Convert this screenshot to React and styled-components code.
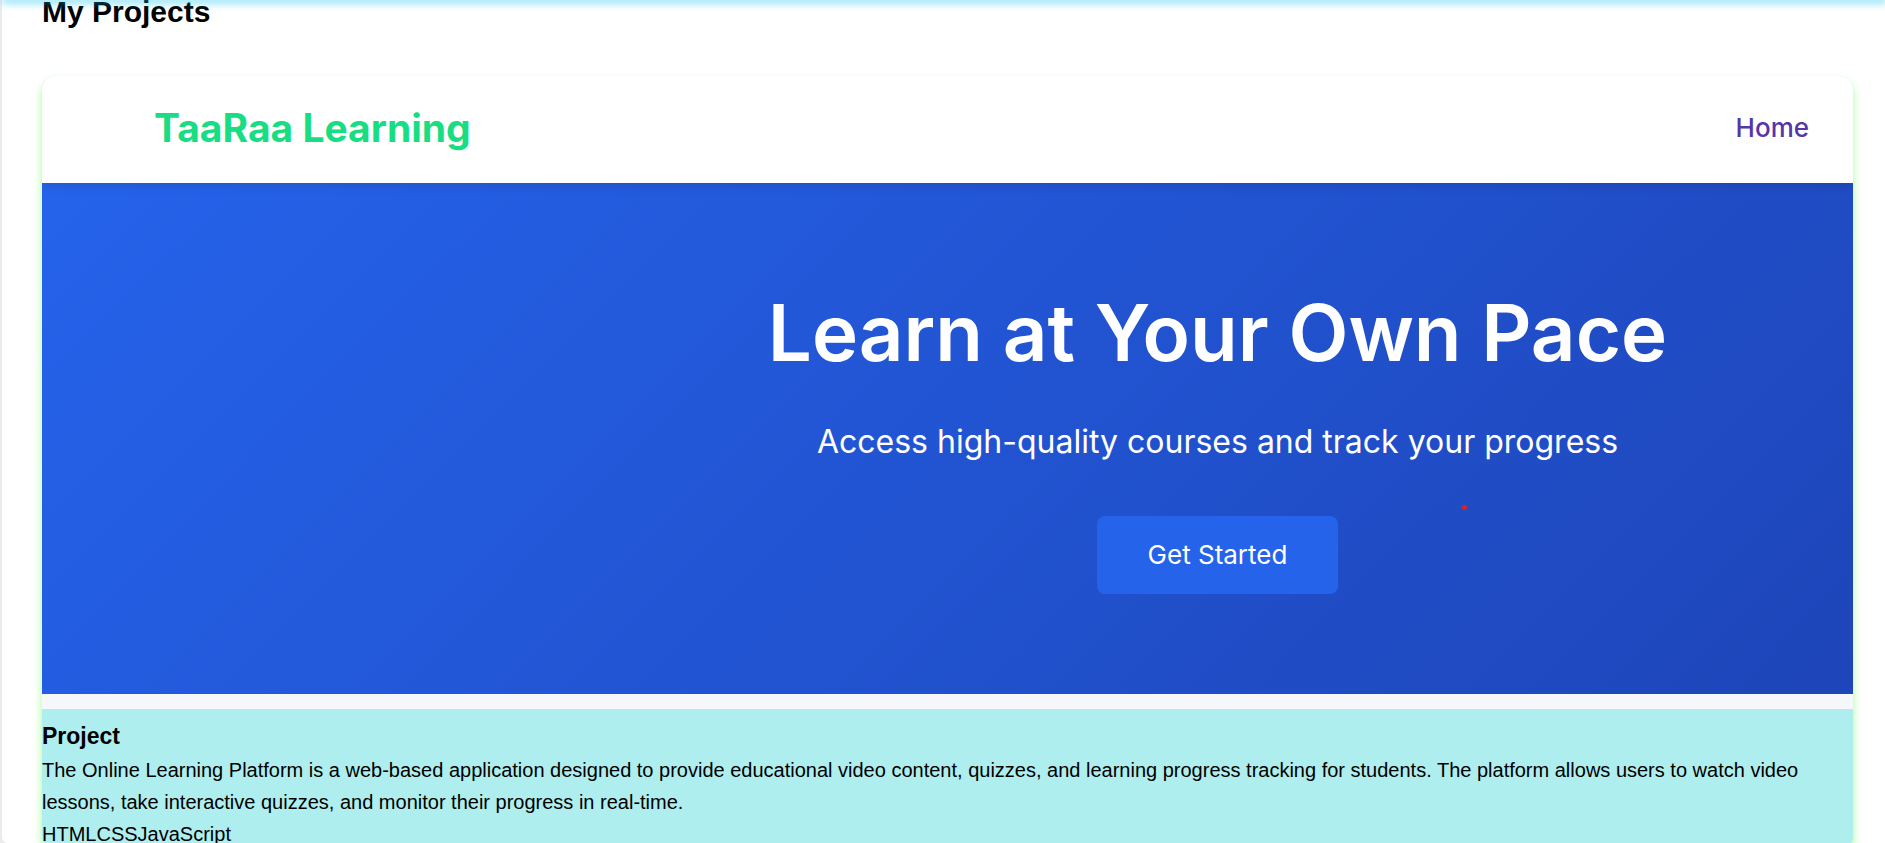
import React from "react";
import styled, { createGlobalStyle } from "styled-components";

const GlobalStyle = createGlobalStyle`
  * { box-sizing: border-box; margin: 0; }
  body {
    background: #ebebeb;
    color: #000;
    font-family: "Liberation Sans", Arial, sans-serif;
    font-size: 20px;
    line-height: 32px;
  }
`;

const Page = styled.div`
  height: 100vh;
  overflow: hidden;
  padding-left: 2px;
`;

const HeaderShadow = styled.div`
  position: absolute;
  top: 0;
  left: 4px;
  right: 0;
  box-shadow: 0 0 8px 2px rgba(0, 190, 240, 0.8);
`;

const Section = styled.main`
  height: 100%;
  overflow: hidden;
  padding: 0 32px 0 40px;
  background: #fff;
  border-radius: 0 0 0 6px;
`;

const SectionTitle = styled.h2`
  font-size: 30px;
  line-height: 24px;
  margin-bottom: 52px;
`;

const Card = styled.article`
  border-radius: 14px;
  background: #afeeee;
  box-shadow: 0 5px 8px rgba(100, 255, 80, 0.6);
`;

const Preview = styled.div`
  overflow: hidden;
  border-radius: 14px 14px 0 0;
  padding-bottom: 15px;
  background: #f5f7fb;
  font-family: Inter, sans-serif;
`;

const Nav = styled.nav`
  position: relative;
  z-index: 1;
  display: flex;
  align-items: center;
  justify-content: space-between;
  height: 107px;
  padding: 0 44px 3px 112px;
  background: #fff;
  box-shadow: 0 2px 10px rgba(0, 0, 0, 0.12);
`;

const Brand = styled.span`
  color: #18dd82;
  font-size: 39px;
  font-weight: 700;
`;

const NavLink = styled.a`
  color: #5535a8;
  font-size: 26px;
  font-weight: 500;
  text-decoration: none;
`;

const Hero = styled.div`
  position: relative;
  display: flex;
  flex-direction: column;
  align-items: center;
  padding: 110px 0 100px 540px;
  color: #fff;
  background: linear-gradient(135deg, #2563eb, #1e45b9);
`;

const HeroTitle = styled.h1`
  font-size: 78px;
  font-weight: 600;
  line-height: 80px;
  white-space: nowrap;
  margin-bottom: 45px;
`;

const HeroText = styled.p`
  font-size: 32px;
  line-height: 48px;
  white-space: nowrap;
  margin-bottom: 50px;
`;

const HeroButton = styled.button`
  width: 241px;
  height: 78px;
  padding-bottom: 3px;
  border: 0;
  border-radius: 8px;
  background: #2563eb;
  color: #fff;
  font-family: inherit;
  font-size: 26px;
`;

const Marker = styled.span`
  position: absolute;
  top: 322px;
  right: 386px;
  width: 5px;
  height: 5px;
  border-radius: 50%;
  background: #e3201f;
`;

const Details = styled.div`
  padding-top: 10px;
`;

const ProjectTitle = styled.h3`
  font-size: 23px;
  line-height: 34px;
  margin-bottom: 1px;
`;

export default function App() {
  return (
    <Page>
      <GlobalStyle />
      <Section>
        <SectionTitle>My Projects</SectionTitle>
        <Card>
          <Preview>
            <Nav>
              <Brand>TaaRaa Learning</Brand>
              <NavLink href="#home">Home</NavLink>
            </Nav>
            <Hero>
              <HeroTitle>Learn at Your Own Pace</HeroTitle>
              <HeroText>Access high-quality courses and track your progress</HeroText>
              <HeroButton type="button">Get Started</HeroButton>
              <Marker />
            </Hero>
          </Preview>
          <Details>
            <ProjectTitle>Project</ProjectTitle>
            <p>
              The Online Learning Platform is a web-based application designed to provide
              educational video content, quizzes, and learning progress tracking for students.
              The platform allows users to watch video lessons, take interactive quizzes, and
              monitor their progress in real-time.
            </p>
            <div>
              <span>HTML</span>
              <span>CSS</span>
              <span>JavaScript</span>
            </div>
          </Details>
        </Card>
      </Section>
      <HeaderShadow />
    </Page>
  );
}
